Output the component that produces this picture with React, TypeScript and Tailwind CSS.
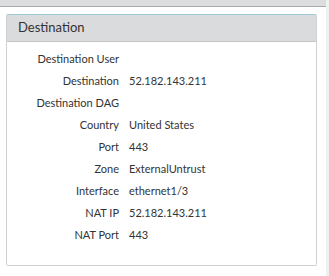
const ROWS: [string, string][] = [
  ["Destination User", ""],
  ["Destination", "52.182.143.211"],
  ["Destination DAG", ""],
  ["Country", "United States"],
  ["Port", "443"],
  ["Zone", "ExternalUntrust"],
  ["Interface", "ethernet1/3"],
  ["NAT IP", "52.182.143.211"],
  ["NAT Port", "443"],
];

export default function App() {
  return (
    <div className="w-[329px] h-[276px] bg-white flex font-['Lato',sans-serif] text-[#333] overflow-hidden">
      <div className="w-[326px] flex flex-col">
        {/* top strip */}
        <div className="h-[7px] bg-[#dcdddf] border-b border-[#a9abad]" />
        <div className="pl-[6px] pt-[7px] w-[317px]">
          <div className="border border-[#d0d0d0] border-t-[#9fcad8] rounded-[2px]">
            <div className="h-[27px] bg-[#dadbdd] border-b border-[#c4c6c8] flex items-center pl-[11px] text-[13px] text-[#333]">
              Destination
            </div>
            <div className="pt-[6px] pb-[19px]">
              {ROWS.map(([label, value]) => (
                <div key={label} className="h-[22px] flex items-center text-[11px]">
                  <div className="w-[112px] text-right">{label}</div>
                  <div className="pl-[10px]">{value}</div>
                </div>
              ))}
            </div>
          </div>
        </div>
      </div>
      <div className="w-[3px] bg-[#f0f0f0]" />
    </div>
  );
}
